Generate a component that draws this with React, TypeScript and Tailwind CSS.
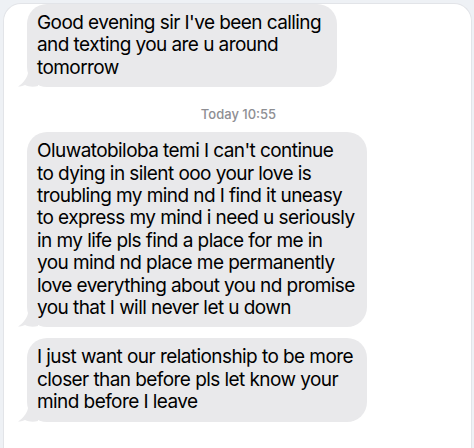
import type { ReactNode } from "react";

const firstLines = ["Good evening sir I've been calling", "and texting you are u around", "tomorrow"];

const secondLines = [
  "Oluwatobiloba temi I can't continue",
  "to dying in silent ooo your love is",
  "troubling my mind nd I find it uneasy",
  "to express my mind i need u seriously",
  "in my life pls find a place for me in",
  "you mind nd place me permanently",
  "love everything about you nd promise",
  "you that I will never let u down",
];

const thirdLines = [
  "I just want our relationship to be more",
  "closer than before pls let know your",
  "mind before I leave",
];

function Tail() {
  return (
    <svg
      className="absolute -left-[9px] bottom-0"
      width="22"
      height="20"
      viewBox="0 0 22 20"
      fill="#e9e9eb"
    >
      <path d="M10 0 L20 0 L20 19 C16 20 11 20 7 18 C4 19 2 19.5 0 19.5 C4 17 9 12 10 6 Z" />
    </svg>
  );
}

function Bubble({ lines, width }: { lines: string[]; width: string }) {
  return (
    <div className={`relative ml-[23px] rounded-[20px] bg-[#e9e9eb] px-[10px] py-[8px] ${width}`}>
      <Tail />
      <div className="relative text-[19px] leading-[22.4px] tracking-[-0.03em] text-black">
        {lines.map((l) => (
          <div key={l} className="whitespace-nowrap">
            {l}
          </div>
        ))}
      </div>
    </div>
  );
}

function Stamp({ children }: { children: ReactNode }) {
  return (
    <div className="mt-[19px] mb-[10px] pl-[2px] text-center text-[13px] leading-[16px] font-medium text-[#8e8e93]">
      {children}
    </div>
  );
}

export default function App() {
  return (
    <div
      className="h-[448px] w-[474px] overflow-hidden bg-[#eef1f5] pl-[3px] pt-[3px]"
      style={{ fontFamily: "Inter, 'Liberation Sans', sans-serif" }}
    >
      <div className="h-[460px] w-[469px] rounded-t-[18px] border-t border-l border-r border-[#e2e4e8] bg-white">
        <Bubble lines={firstLines} width="w-[310px]" />
        <Stamp>Today 10:55</Stamp>
        <Bubble lines={secondLines} width="w-[340px]" />
        <div className="h-[11px]" />
        <Bubble lines={thirdLines} width="w-[340px]" />
      </div>
    </div>
  );
}
